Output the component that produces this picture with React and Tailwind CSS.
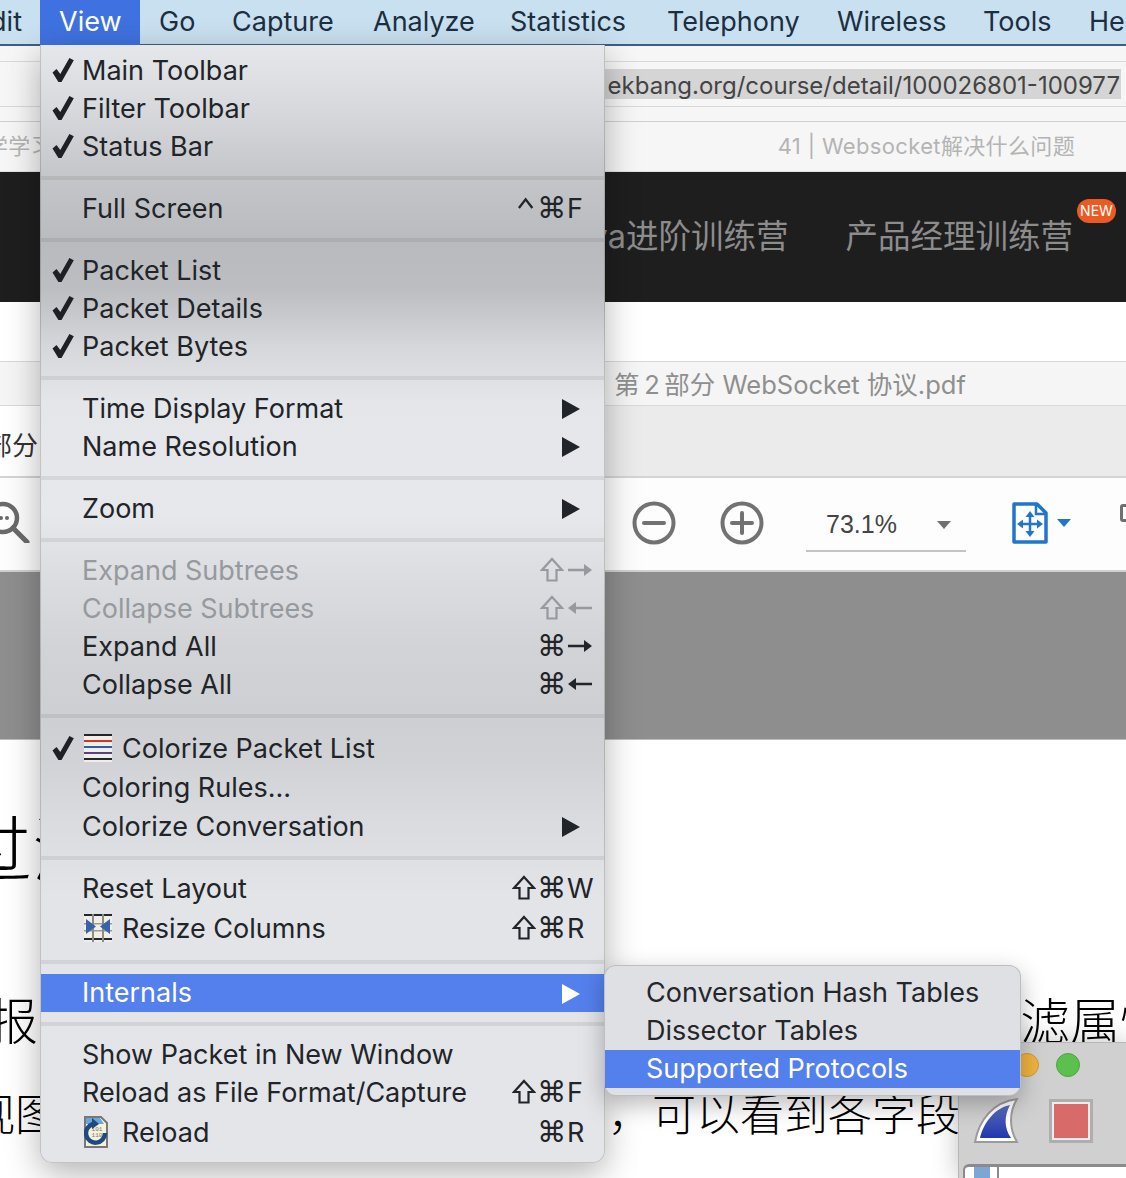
const sans = { fontFamily: 'Inter, "Noto Sans CJK SC", sans-serif' }

function Check({ className = '' }) {
  return (
    <svg viewBox="0 0 24 26" className={`w-[24px] h-[26px] ${className}`}>
      <path d="M1.5 15.5 L5.5 12 L9.3 17 L18.4 1 L22.8 3.2 L10.5 25 L7.4 25 Z" fill="#1d2024" />
    </svg>
  )
}

function Arrow({ dir, color }) {
  return (
    <svg viewBox="0 0 24 14" className="w-[24px] h-[14px]">
      {dir === 'right' ? (
        <path d="M0 5.7h16V1l8 6-8 6V8.3H0z" fill={color} />
      ) : (
        <path d="M24 5.7H8V1L0 7l8 6V8.3h16z" fill={color} />
      )}
    </svg>
  )
}

function Shift({ color }) {
  return (
    <svg viewBox="0 0 24 26" className="w-[24px] h-[26px]">
      <path d="M12 2 L22 13 H16.5 V23.5 H7.5 V13 H2 Z" fill="none" stroke={color} strokeWidth="2.2" />
    </svg>
  )
}

function Ctrl({ color }) {
  return (
    <svg viewBox="0 0 24 26" className="w-[24px] h-[26px] ml-[5px]">
      <path d="M2 13 L9 4 L16 13" fill="none" stroke={color} strokeWidth="2.4" />
    </svg>
  )
}

function Triangle({ color = '#1f2226' }) {
  return (
    <svg viewBox="0 0 18 20" className="w-[18px] h-[20px] mt-[2px]">
      <path d="M0 0 L18 10 L0 20 Z" fill={color} />
    </svg>
  )
}

function Key({ k, color }) {
  if (k === 'shift') return <Shift color={color} />
  if (k === 'ctrl') return <Ctrl color={color} />
  if (k === 'right' || k === 'left') return <Arrow dir={k} color={color} />
  if (k === '⌘') return <span className="text-[29px] leading-none -ml-[3px] font-['DejaVu_Sans']">⌘</span>
  return <span className="text-[27px] leading-none -ml-[1px]">{k}</span>
}

function Shortcut({ a, b, c, color }) {
  return (
    <div className="ml-auto w-[92px] flex items-center" style={{ color }}>
      <div className="w-[28px] flex">{a && <Key k={a} color={color} />}</div>
      <div className="w-[28px] flex">{b && <Key k={b} color={color} />}</div>
      <div className="flex">{c && <Key k={c} color={color} />}</div>
    </div>
  )
}

function Row({ label, check, sub, keys, icon, disabled, active, h = 'h-[38px]' }) {
  const fg = active ? '#ffffff' : disabled ? '#96999d' : '#212428'
  return (
    <div className={`${h} flex items-center relative ${active ? 'bg-[#5480ee]' : ''}`} style={{ color: fg }}>
      <div className="w-[41px] shrink-0 pl-[10px] flex items-center">{check && <Check />}</div>
      {icon && <div className="w-[40px] shrink-0 pl-[2px] flex items-center">{icon}</div>}
      <span className={`text-[27px] leading-none whitespace-nowrap font-[445] ${active ? 'pb-[2px]' : ''}`}>{label}</span>
      {sub && (
        <div className="ml-auto mr-[24px] flex">
          <Triangle color={fg} />
        </div>
      )}
      {keys && <Shortcut {...keys} color={fg} />}
    </div>
  )
}

function Group({ children, last, className = 'pt-[9px] pb-[11px]' }) {
  return <div className={`${className} ${last ? '' : 'border-b-4 border-black/[0.07]'}`}>{children}</div>
}

function ColorizeIcon() {
  return (
    <svg viewBox="0 0 28 28" className="w-[28px] h-[28px]">
      <rect width="28" height="28" fill="#efefe8" />
      <rect y="0" width="28" height="2" fill="#23262b" />
      <rect y="6" width="28" height="2" fill="#d8322c" />
      <rect y="12" width="28" height="2" fill="#2f5fa8" />
      <rect y="18" width="28" height="2" fill="#5c3f85" />
      <rect y="24" width="28" height="2" fill="#23262b" />
    </svg>
  )
}

function ResizeIcon() {
  return (
    <svg viewBox="0 0 28 28" className="w-[28px] h-[28px]">
      <rect width="28" height="28" fill="#efefe8" />
      <rect y="0" width="28" height="2" fill="#23262b" />
      <rect y="9" width="28" height="1.5" fill="#9b9b94" />
      <rect y="16" width="28" height="1.5" fill="#9b9b94" />
      <rect y="24" width="28" height="2" fill="#23262b" />
      <rect x="8" width="2" height="28" fill="#8c8c85" />
      <rect x="18" width="2" height="28" fill="#8c8c85" />
      <path d="M2 5 L12 12.5 L2 20 Z M26 5 L16 12.5 L26 20 Z" fill="#3a62ab" />
    </svg>
  )
}

function ReloadIcon() {
  return (
    <svg viewBox="0 0 24 32" className="w-[24px] h-[32px]">
      <path d="M1 1 H17 L23 7 V31 H1 Z" fill="#f5f2d8" stroke="#777" strokeWidth="2" />
      <path d="M2 2 H16 L20 8 H2 Z" fill="#6aa6dc" />
      <text x="13" y="15" fontSize="6" textAnchor="middle" fill="#777" fontFamily="Liberation Mono">101</text>
      <text x="13" y="21" fontSize="6" textAnchor="middle" fill="#777" fontFamily="Liberation Mono">110</text>
      <path d="M9 8 A 9.5 9.5 0 1 0 21 17" fill="none" stroke="#1f4a80" strokeWidth="4.5" />
      <path d="M8 2 L15 8 L8 13 Z" fill="#1f4a80" />
    </svg>
  )
}

function ViewMenu() {
  return (
    <div
      className="absolute left-[40px] top-[45px] w-[565px] h-[1118px] rounded-b-[12px] border-x border-b border-black/15 shadow-[0_10px_34px_rgba(0,0,0,0.3)] bg-[linear-gradient(180deg,#e5e7ea_0%,#d6d8db_6%,#c3c5c8_12%,#b8babd_18%,#bcbec1_22%,#d5d7da_27%,#e4e6e9_32%,#e6e8eb_42%,#dcdee1_47%,#d1d3d6_54%,#cdcfd2_60%,#d0d2d5_64%,#dadce0_70%,#e2e4e7_76%,#e3e5e8_100%)]"
    >
      <Group className="pt-[6px] pb-[11px]">
        <Row check label="Main Toolbar" />
        <Row check label="Filter Toolbar" />
        <Row check label="Status Bar" />
      </Group>
      <Group>
        <Row label="Full Screen" keys={{ a: 'ctrl', b: '⌘', c: 'F' }} />
      </Group>
      <Group>
        <Row check label="Packet List" />
        <Row check label="Packet Details" />
        <Row check label="Packet Bytes" />
      </Group>
      <Group>
        <Row label="Time Display Format" sub />
        <Row label="Name Resolution" sub />
      </Group>
      <Group>
        <Row label="Zoom" sub />
      </Group>
      <Group>
        <Row disabled label="Expand Subtrees" keys={{ b: 'shift', c: 'right' }} />
        <Row disabled label="Collapse Subtrees" keys={{ b: 'shift', c: 'left' }} />
        <Row label="Expand All" keys={{ b: '⌘', c: 'right' }} />
        <Row label="Collapse All" keys={{ b: '⌘', c: 'left' }} />
      </Group>
      <Group className="pt-[10px] pb-[11px]">
        <Row check label="Colorize Packet List" icon={<ColorizeIcon />} h="h-[40px]" />
        <Row label="Coloring Rules..." h="h-[39px]" />
        <Row label="Colorize Conversation" sub />
      </Group>
      <Group>
        <Row label="Reset Layout" keys={{ a: 'shift', b: '⌘', c: 'W' }} />
        <Row label="Resize Columns" icon={<ResizeIcon />} keys={{ a: 'shift', b: '⌘', c: 'R' }} h="h-[42px]" />
      </Group>
      <Group className="py-[10px]">
        <Row active label="Internals" sub />
      </Group>
      <Group last className="pt-[9px]">
        <Row label="Show Packet in New Window" />
        <Row label="Reload as File Format/Capture" keys={{ a: 'shift', b: '⌘', c: 'F' }} />
        <Row label="Reload" icon={<ReloadIcon />} keys={{ b: '⌘', c: 'R' }} h="h-[42px]" />
      </Group>
    </div>
  )
}

function SubMenu() {
  const items = ['Conversation Hash Tables', 'Dissector Tables', 'Supported Protocols']
  return (
    <div className="absolute left-[604px] top-[965px] w-[417px] h-[131px] py-[8px] rounded-[12px] border border-black/15 bg-[#dfe0e3] shadow-[0_8px_24px_rgba(0,0,0,0.28)]">
      {items.map((t, i) => (
        <div
          key={t}
          className={`h-[38px] pl-[41px] pb-[2px] flex items-center text-[27px] font-[435] leading-none whitespace-nowrap ${
            i === 2 ? 'bg-[#5480ee] text-white' : 'text-[#24272b]'
          }`}
        >
          {t}
        </div>
      ))}
    </div>
  )
}

function WiresharkWindow() {
  return (
    <div className="absolute left-[958px] top-[1042px] w-[168px] h-[136px] bg-[#d0d0d0] border-l border-t border-[#b8b8b8] shadow-[0_0_24px_rgba(0,0,0,0.25)]">
      <div className="h-[44px] flex items-center pl-[56px] gap-[17px]">
        <div className="w-[24px] h-[24px] rounded-full bg-[#efb43f] border border-[#d09a30]" />
        <div className="w-[24px] h-[24px] rounded-full bg-[#5bc04d] border border-[#4aa53e]" />
      </div>
      <div className="mt-[10px] flex items-center pl-[14px] gap-[30px] h-[48px]">
        <svg viewBox="0 0 46 46" className="w-[46px] h-[46px]">
          <defs>
            <linearGradient id="fin" x1="0" y1="0" x2="0" y2="1">
              <stop offset="0" stopColor="#5a6cc0" />
              <stop offset="1" stopColor="#2238ab" />
            </linearGradient>
          </defs>
          <path d="M2 44 C6 22 20 4 44 1 C36 14 36 30 44 44 Z" fill="#fff" stroke="#9a9a9a" strokeWidth="2" />
          <path d="M7 40 C11 24 22 10 37 7 C31 18 31 30 38 40 Z" fill="url(#fin)" />
        </svg>
        <div className="w-[44px] h-[44px] bg-[#ececec] border-[3px] border-[#aeaeae] p-[2px]">
          <div className="w-full h-full bg-[#d96a6a]" />
        </div>
      </div>
      <div className="mt-[19px] ml-[4px] h-[30px] rounded-tl-[6px] border-t-[3px] border-l-2 border-[#8b8b8b] bg-white flex">
        <div className="w-[34px] border-r-2 border-[#8b8b8b] pl-[9px]">
          <div className="w-[16px] h-[14px] bg-[#7ea6d4]" />
        </div>
      </div>
    </div>
  )
}

function SearchIcon() {
  return (
    <svg viewBox="0 0 30 42" className="w-[30px] h-[42px]">
      <circle cx="3" cy="17" r="14" fill="none" stroke="#6a6a6a" strokeWidth="4.5" />
      <circle cx="1" cy="17" r="2" fill="#6a6a6a" />
      <circle cx="7" cy="17" r="2" fill="#6a6a6a" />
      <path d="M13 27 L27 41" stroke="#6a6a6a" strokeWidth="5" strokeLinecap="round" />
    </svg>
  )
}

function ZoomCircle({ plus }) {
  return (
    <svg viewBox="0 0 44 44" className="w-[44px] h-[44px]">
      <circle cx="22" cy="22" r="19.5" fill="none" stroke="#727272" strokeWidth="4" />
      <path d="M12 22 H32" stroke="#727272" strokeWidth="4" strokeLinecap="round" />
      {plus && <path d="M22 12 V32" stroke="#727272" strokeWidth="4" strokeLinecap="round" />}
    </svg>
  )
}

function FitPageIcon() {
  return (
    <svg viewBox="0 0 36 42" className="w-[36px] h-[42px]">
      <path d="M2 2 H25 L34 11 V40 H2 Z" fill="#fff" stroke="#2176cc" strokeWidth="3.5" strokeLinejoin="round" />
      <path d="M24 2 V12 H34" fill="none" stroke="#2176cc" strokeWidth="2.5" />
      <path d="M18 12 V32 M8 22 H28" stroke="#2176cc" strokeWidth="2.5" />
      <path d="M18 9 L22.5 15 H13.5 Z M18 35 L22.5 29 H13.5 Z M5 22 L11 17.5 V26.5 Z M31 22 L25 17.5 V26.5 Z" fill="#2176cc" />
    </svg>
  )
}

function Caret({ color, w = 'w-[14px]' }) {
  return (
    <svg viewBox="0 0 14 8" className={`${w} h-[8px]`}>
      <path d="M0 0 H14 L7 8 Z" fill={color} />
    </svg>
  )
}

const menus = [
  { t: 'Go', w: 'w-[73px]' },
  { t: 'Capture', w: 'w-[141px]' },
  { t: 'Analyze', w: 'w-[137px]' },
  { t: 'Statistics', w: 'w-[157px]' },
  { t: 'Telephony', w: 'w-[170px]' },
  { t: 'Wireless', w: 'w-[146px]' },
  { t: 'Tools', w: 'w-[106px]' },
  { t: 'Help', w: 'w-[80px]' },
]

export default function App() {
  return (
    <div className="w-[1126px] h-[1178px] overflow-hidden relative bg-white" style={sans}>
      {/* menu bar */}
      <div className="h-[46px] flex bg-[#c9e0f0] border-b-2 border-[#3f5f80] text-[27px] text-[#1b2f40]">
        <div className="w-[40px] shrink-0 overflow-hidden flex justify-end items-center h-[44px]">
          <span className="whitespace-nowrap pr-[18px]">Edit</span>
        </div>
        <div className="w-[100px] shrink-0 h-[46px] bg-[#3f72e0] text-white flex items-center pl-[19px] pb-[2px]">View</div>
        {menus.map((m) => (
          <div key={m.t} className={`${m.w} shrink-0 h-[44px] flex items-center pl-[19px] whitespace-nowrap`}>
            {m.t}
          </div>
        ))}
      </div>

      {/* browser chrome */}
      <div className="bg-[#f6f6f6]">
        <div className="h-[16px] border-b border-[#d9d9d9]" />
        <div className="h-[45px] border-b border-[#d9d9d9] flex items-center justify-end pr-[5px]">
          <div className="w-[518px] h-[30px] bg-[#d5d5d5] pt-[3px] flex items-center justify-end pr-[1px] text-[24px] leading-none text-[#444] whitespace-nowrap overflow-hidden">
            ekbang.org/course/detail/100026801-100977
          </div>
        </div>
        <div className="h-[15px] border-b border-[#d0d0d0]" />
        <div className="h-[50px] border-b border-[#e2e2e2] flex items-center justify-between pr-[51px] text-[22px] tracking-[0.35px] text-[#b4b4b4]">
          <span className="-ml-[14px]">学学习</span>
          <span>41 | Websocket解决什么问题</span>
        </div>
      </div>

      {/* site header */}
      <div className="h-[130px] bg-[#1e1e1e] flex items-center justify-end pr-[53px] text-[32.5px] text-[#8c8c8c] whitespace-nowrap">
        <span className="mr-[57px]">Java进阶训练营</span>
        <span className="relative">
          产品经理训练营
          <span className="absolute -right-[43px] -top-[14px] w-[39px] h-[24px] rounded-full bg-[#ec5a24] text-white text-[14px] leading-[24px] text-center">
            NEW
          </span>
        </span>
      </div>

      <div className="h-[60px] border-b border-[#d9d9d9]" />

      {/* pdf tab row */}
      <div className="h-[44px] pt-[3px] bg-[#f5f5f5] border-b border-[#d9d9d9] flex items-center pl-[614px] text-[25.5px] text-[#8f8f8f] whitespace-nowrap">
        第{'\u2009'}2{'\u2009'}部分 WebSocket 协议.pdf
      </div>
      <div className="h-[72px] flex border-b-2 border-[#d4d4d4]">
        <div className="w-[300px] bg-white flex items-center pt-[8px] text-[26px] text-[#333] whitespace-nowrap">
          <span className="-ml-[14px]">部分</span>
        </div>
        <div className="flex-1 bg-[#ebebeb]" />
      </div>

      {/* pdf toolbar */}
      <div className="h-[94px] pb-[2px] bg-[#fdfdfd] border-b-2 border-[#d0d0d0] flex items-center relative">
        <div className="w-[632px] shrink-0 -mt-[2px]">
          <SearchIcon />
        </div>
        <ZoomCircle />
        <div className="w-[44px]" />
        <ZoomCircle plus />
        <div className="ml-[42px] w-[160px] h-[52px] border-b-2 border-[#c4c4c4] mt-[5px] flex items-center pl-[20px] text-[25px] font-['Liberation_Sans'] text-[#444]">
          73.1%
          <div className="ml-auto mr-[15px]">
            <Caret color="#707070" />
          </div>
        </div>
        <div className="ml-[46px]">
          <FitPageIcon />
        </div>
        <div className="ml-[9px]">
          <Caret color="#2176cc" />
        </div>
        <div className="ml-auto -mr-[3px] w-[9px] h-[18px] border-[3px] border-[#707070] rounded-[3px] -mt-[20px]" />
      </div>

      <div className="h-[168px] bg-[#8e8e8e] border-b border-[#bdbdbd]" />

      {/* article */}
      <div className="pt-[70px] text-black whitespace-nowrap font-light">
        <div className="h-[80px] -ml-[40px] text-[72px] leading-[80px]">过滤</div>
        <div className="mt-[97px] h-[70px] flex justify-between text-[50px] leading-[70px]">
          <span className="-ml-[12px]">报</span>
          <span className="-mr-[44px]">过滤属性</span>
        </div>
        <div className="mt-[23px] h-[70px] flex text-[44px] leading-[70px]">
          <span className="-ml-[29px]">视图</span>
          <span className="ml-[549px]">，可以看到各字段</span>
        </div>
      </div>

      <WiresharkWindow />
      <ViewMenu />
      <SubMenu />
    </div>
  )
}
